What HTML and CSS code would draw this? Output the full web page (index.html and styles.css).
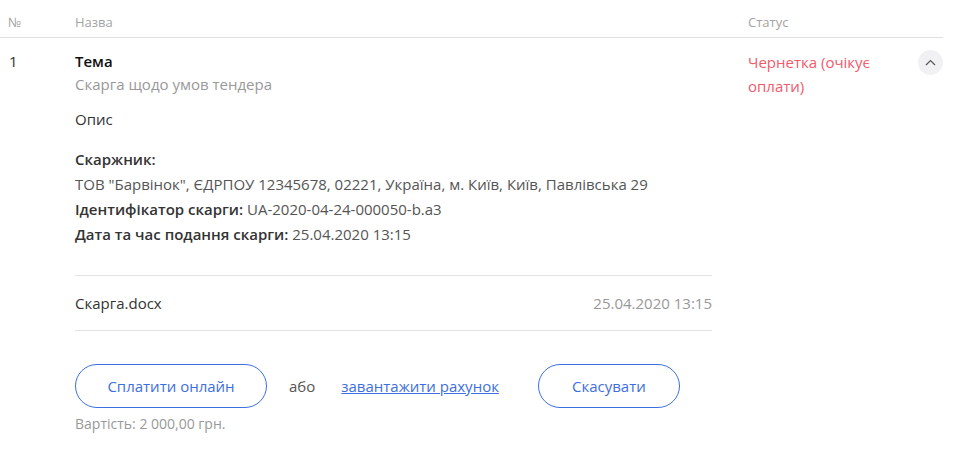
FILE: index.html
```html
<!DOCTYPE html>
<html lang="uk">
<head>
    <meta charset="UTF-8">
    <meta name="viewport" content="width=device-width, initial-scale=1.0">
    <title>Скарги</title>
    <link rel="stylesheet" href="styles.css">
</head>
<body>
    <div class="complaints">
        <div class="head-row">
            <div class="col-num">№</div>
            <div class="col-name">Назва</div>
            <div class="col-status">Статус</div>
            <div class="col-toggle"></div>
        </div>
        <div class="item-row">
            <div class="col-num">1</div>
            <div class="col-name">
                <div class="details">
                    <div class="topic">Тема</div>
                    <div class="topic-text">Скарга щодо умов тендера</div>
                    <div class="desc">Опис</div>
                    <div class="info">
                        <div class="label">Скаржник:</div>
                        <div>ТОВ "Барвінок", ЄДРПОУ 12345678, 02221, Україна, м. Київ, Київ, Павлівська 29</div>
                        <div><span class="label">Ідентифікатор скарги:</span> UA-2020-04-24-000050-b.a3</div>
                        <div><span class="label">Дата та час подання скарги:</span> 25.04.2020 13:15</div>
                    </div>
                    <div class="file-row">
                        <span class="file-name">Скарга.docx</span>
                        <span class="file-date">25.04.2020 13:15</span>
                    </div>
                </div>
                <div class="actions">
                    <button class="btn btn-pay">Сплатити онлайн</button>
                    <span class="or">або</span>
                    <a href="#" class="invoice-link">завантажити рахунок</a>
                    <button class="btn btn-cancel">Скасувати</button>
                </div>
                <div class="price">Вартість: 2 000,00 грн.</div>
            </div>
            <div class="col-status status-draft">Чернетка (очікує оплати)</div>
            <div class="col-toggle">
                <button class="toggle">
                    <svg width="11" height="7" viewBox="0 0 11 7"><path d="M1 6 L5.5 1.5 L10 6" fill="none" stroke="#555" stroke-width="1.2"/></svg>
                </button>
            </div>
        </div>
    </div>
</body>
</html>
```

FILE: styles.css
```css
body {
    margin: 0;
    font-family: "Open Sans", Arial, sans-serif;
    font-size: 15px;
    color: #333;
    background-color: #fff;
}

.complaints {
    width: 943px;
}

.head-row,
.item-row {
    display: flex;
}

.col-num {
    width: 75px;
    flex-shrink: 0;
}

.col-name {
    width: 673px;
    flex-shrink: 0;
}

.col-status {
    width: 170px;
    flex-shrink: 0;
}

.col-toggle {
    width: 25px;
    flex-shrink: 0;
}

.head-row {
    color: #a3a3a3;
    font-size: 13px;
    line-height: 20px;
    padding: 12px 0 5px;
    border-bottom: 1px solid #e0e0e0;
}

.head-row .col-num {
    padding-left: 8px;
    width: 67px;
}

.item-row {
    padding-top: 12px;
}

.item-row .col-num {
    padding-left: 9px;
    width: 66px;
    line-height: 23px;
    color: #333;
}

.details {
    width: 637px;
}

.topic {
    font-weight: 600;
    color: #111;
    line-height: 23px;
}

.topic-text {
    color: #999;
    line-height: 23px;
}

.desc {
    margin-top: 11px;
    line-height: 24px;
}

.info {
    margin-top: 16px;
    line-height: 25px;
    color: #555;
}

.label {
    font-weight: 600;
    color: #333;
}

.file-row {
    display: flex;
    justify-content: space-between;
    margin-top: 28px;
    border-top: 1px solid #e3e3e3;
    border-bottom: 1px solid #e3e3e3;
    padding: 17px 0;
    line-height: 20px;
}

.file-date {
    color: #999;
}

.actions {
    display: flex;
    align-items: center;
    margin-top: 33px;
}

.btn {
    height: 44px;
    border: 1px solid #3d6fe0;
    border-radius: 22px;
    background-color: #fff;
    color: #3d6fe0;
    font-family: inherit;
    font-size: 15px;
    cursor: pointer;
}

.btn-pay {
    width: 192px;
}

.btn-cancel {
    width: 142px;
    margin-left: 39px;
}

.or {
    margin-left: 22px;
    color: #555;
}

.invoice-link {
    margin-left: 26px;
    color: #3d6fe0;
}

.price {
    margin-top: 6px;
    font-size: 14px;
    line-height: 20px;
    color: #999;
}

.status-draft {
    width: 160px;
    margin-right: 10px;
    color: #f25a6a;
    line-height: 24px;
}

.toggle {
    width: 25px;
    height: 25px;
    border: none;
    border-radius: 50%;
    padding: 0;
    background-color: #f1f1f3;
    display: flex;
    align-items: center;
    justify-content: center;
    cursor: pointer;
}
```
